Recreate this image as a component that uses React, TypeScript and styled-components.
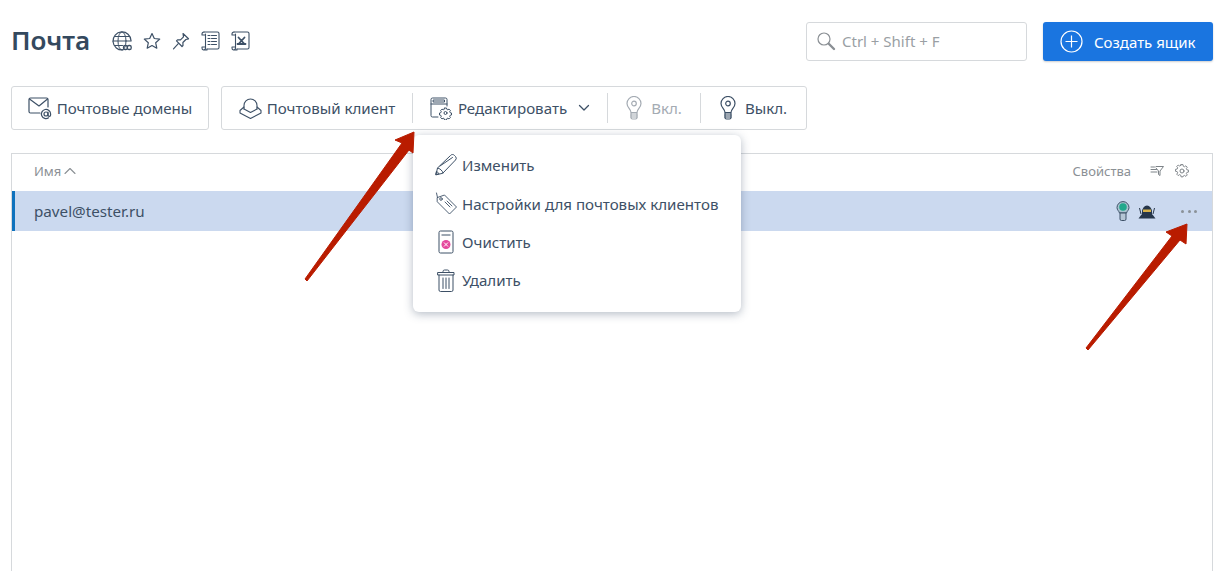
import React from "react";
import styled, { createGlobalStyle } from "styled-components";

const ink = "#3d5066";

const Global = createGlobalStyle`
  html, body { margin: 0; padding: 0; background: #fff; height: 100%; overflow: hidden; }
  body { font-family: "Noto Sans", "Open Sans", sans-serif; color: ${ink}; }
  #root { height: 100%; }
`;

const Page = styled.div`
  position: relative;
  width: 1224px;
  height: 571px;
  overflow: hidden;
  padding: 22px 11px 0 11px;
  box-sizing: border-box;
`;

const Header = styled.div`
  display: flex;
  align-items: center;
  height: 39px;
`;

const Title = styled.h1`
  margin: -2px 22px 0 0;
  font-size: 26px;
  font-weight: 600;
  line-height: 39px;
  color: #34495e;
`;

const HeaderIcons = styled.div`
  display: flex;
  align-items: center;
  gap: 11px;
  margin-top: -2px;
  color: ${ink};
`;

const Spacer = styled.div`
  flex: 1;
`;

const Search = styled.div`
  display: flex;
  align-items: center;
  gap: 6px;
  width: 221px;
  height: 39px;
  box-sizing: border-box;
  padding: 0 0 2px 9px;
  border: 1px solid #d6d9dc;
  border-radius: 3px;
  color: #9a9fa4;
  font-size: 15px;
  margin-right: 16px;
`;

const CreateButton = styled.button`
  display: flex;
  align-items: center;
  gap: 11px;
  width: 170px;
  height: 39px;
  padding: 0 0 0 17px;
  border: 0;
  border-radius: 3px;
  background: #1a75e0;
  color: #fff;
  font: inherit;
  font-size: 15px;
  box-shadow: 0 1px 2px rgba(0, 0, 0, 0.2);
`;

const Toolbar = styled.div`
  display: flex;
  gap: 12px;
  margin-top: 25px;
`;

const Group = styled.div`
  display: flex;
  align-items: center;
  height: 44px;
  box-sizing: border-box;
  border: 1px solid #d6d9dc;
  border-radius: 3px;
`;

const ToolButton = styled.div<{ $w: number; $gap?: number; $disabled?: boolean }>`
  position: relative;
  display: flex;
  align-items: center;
  justify-content: center;
  gap: ${(p) => p.$gap ?? 5}px;
  width: ${(p) => p.$w}px;
  height: 100%;
  font-size: 15.1px;
  white-space: nowrap;
  color: ${(p) => (p.$disabled ? "#a4abb3" : ink)};
`;

const Divider = styled.div`
  width: 1px;
  height: 30px;
  background: #d6d9dc;
`;

const Table = styled.div`
  margin-top: 23px;
  height: 420px;
  border: 1px solid #d6d9dc;
  border-bottom: 0;
`;

const TableHead = styled.div`
  display: flex;
  align-items: center;
  height: 37px;
  padding: 0 23px 3px 22px;
  box-sizing: border-box;
  font-size: 13px;
  color: #8b9095;
`;

const SortLabel = styled.span`
  display: flex;
  align-items: center;
  gap: 3px;
`;

const HeadTools = styled.div`
  display: flex;
  align-items: center;
  gap: 11px;
  margin-left: 19px;
  color: #7d8388;
`;

const Row = styled.div`
  display: flex;
  align-items: center;
  height: 40px;
  box-sizing: border-box;
  padding: 0 15px 0 19px;
  border-left: 3px solid #0f72bd;
  background: #cbd9ef;
  font-size: 15.2px;
`;

const RowIcons = styled.div`
  display: flex;
  align-items: center;
  gap: 8px;
  margin-right: 25px;
`;

const Dots = styled.div`
  display: flex;
  gap: 3.5px;
  span {
    width: 3px;
    height: 3px;
    border-radius: 50%;
    background: #8b9298;
  }
`;

const Menu = styled.div`
  position: absolute;
  z-index: 2;
  top: 48px;
  left: 0;
  width: 328px;
  height: 177px;
  box-sizing: border-box;
  padding: 11px 0 0 22px;
  background: #fff;
  border-radius: 6px;
  box-shadow: 0 2px 10px rgba(40, 60, 90, 0.35);
`;

const MenuItem = styled.div`
  display: flex;
  align-items: center;
  gap: 5px;
  height: 38.4px;
  font-size: 15.1px;
  color: ${ink};
`;

const MenuIcon = styled.div`
  display: flex;
  justify-content: center;
  width: 22px;
`;

const ArrowLayer = styled.svg`
  position: absolute;
  z-index: 3;
  left: 0;
  top: 0;
  pointer-events: none;
`;

const S = { fill: "none", stroke: "currentColor", strokeWidth: 1, strokeLinecap: "round", strokeLinejoin: "round" } as const;

const GlobeIcon = () => (
  <svg width="20" height="20" viewBox="0 0 20 20" {...S}>
    <path d="M11 18.900A9 9 0 1 1 19 9.600" strokeWidth="1.200" />
    <ellipse cx="10" cy="10" rx="4" ry="9" />
    <path d="M2.500 5.500h15M1 10h18M2.500 14.500h8" strokeWidth="1.200" />
    <rect x="11.500" y="14.500" width="3.800" height="4" rx="1.600" strokeWidth="1.300" />
    <rect x="15.400" y="14.500" width="3.800" height="4" rx="1.600" strokeWidth="1.300" />
  </svg>
);

const StarIcon = () => (
  <svg width="18" height="18" viewBox="0 0 18 18" {...S} strokeWidth="1.200">
    <path d="M9 1.500l2.300 5 5.400.6-4 3.700 1.100 5.400L9 13.500l-4.800 2.700 1.100-5.400-4-3.700 5.400-.6z" />
  </svg>
);

const PinIcon = () => (
  <svg width="18" height="18" viewBox="0 0 18 18" {...S} strokeWidth="1.200">
    <path d="M11 1.500l5.500 5.300-2.600.7-3 3 .1 3-1 1-5.500-5.600 1-1h3l3-3z" />
    <path d="M6.300 11.700L1.500 16.800" />
  </svg>
);

const ScrollIcon = ({ x }: { x?: boolean }) => (
  <svg width="19" height="20" viewBox="0 0 19 20" {...S} strokeWidth="1.100">
    <path d="M3 1h13.500a1.500 1.500 0 0 1 1.500 1.500v14a1.500 1.500 0 0 1-1.500 1.500H6" />
    <path d="M3 1a2 2 0 0 0-2 2v1h3.500V3M4.500 3v14M4.500 17a2 2 0 0 1-2 2h0a2 2 0 0 1-1.500-2v-1h3.500M6 18v1H2.500" />
    {x ? (
      <path d="M7.500 6.500l6 6.500M13.500 6.500l-6 6.500M6.500 13h8" strokeWidth="1.800" />
    ) : (
      <path d="M7 4.500h2M10.500 4.500h5M7 7.500h2M10.500 7.500h5M7 10.500h2M10.500 10.500h5M7 13.500h2M10.500 13.500h5" />
    )}
  </svg>
);

const MailIcon = () => (
  <svg width="24" height="24" viewBox="0 0 24 24" {...S} strokeWidth="1.200">
    <path d="M12 17H2.500A1.500 1.500 0 0 1 1 15.500v-12A1.500 1.500 0 0 1 2.500 2h16A1.500 1.500 0 0 1 20 3.500V11" />
    <path d="M1.500 3l9.500 7 8.500-7" />
    <circle cx="18" cy="18" r="2" />
    <path d="M20 16v3a1.300 1.300 0 0 0 2.600 0v-1a4.600 4.600 0 1 0-2 3.800" />
  </svg>
);

const InboxIcon = () => (
  <svg width="23" height="22" viewBox="0 0 23 22" {...S} strokeWidth="1.100">
    <path d="M5 12V8.500a6.500 6.500 0 0 1 13 0V12" />
    <path d="M5 12l6.500 3.500L18 12" />
    <path d="M5 10L1 13.500v2.500l10.500 5.500L22 16v-2.500L18 10" />
  </svg>
);

const SmallGear = () => (
  <g>
    <circle cx="15.500" cy="16" r="1.500" />
    <path d="M14.500 11h2l.3 1.300 1 .5 1.200-.7 1.400 1.400-.7 1.200.5 1 1.300.3v2l-1.300.3-.5 1 .7 1.200-1.400 1.400-1.200-.7-1 .5-.3 1.300h-2l-.3-1.300-1-.5-1.200.7-1.400-1.400.7-1.200-.5-1-1.300-.3v-2l1.300-.3.5-1-.7-1.200 1.400-1.400 1.200.7 1-.5z" />
  </g>
);

const EditPanelIcon = () => (
  <svg width="23" height="23" viewBox="0 0 23 23" {...S} strokeWidth="1">
    <path d="M8 20H2.500A1.500 1.500 0 0 1 1 18.500v-16A1.500 1.500 0 0 1 2.500 1h13A1.500 1.500 0 0 1 17 2.500V9" />
    <path d="M1 7h16" />
    <rect x="3.500" y="3" width="11" height="2" />
    <SmallGear />
  </svg>
);

const BulbIcon = () => (
  <svg width="16" height="24" viewBox="0 0 16 24" {...S} strokeWidth="1.200">
    <path d="M5 16.500C5 13 1 11.500 1 7.500a7 7 0 0 1 14 0c0 4-4 5.500-4 9z" />
    <path d="M5 17h6v4.500A1.500 1.500 0 0 1 9.500 23h-3A1.500 1.500 0 0 1 5 21.500z" />
    <path d="M5 19h6M5 21h6" />
    <circle cx="8" cy="7.500" r="2.300" />
  </svg>
);

const ChevronDown = () => (
  <svg width="12" height="8" viewBox="0 0 12 8" {...S} strokeWidth="1.300" style={{ marginLeft: 6 }}>
    <path d="M1.500 1.500L6 6l4.500-4.500" />
  </svg>
);

const ChevronUp = () => (
  <svg width="12" height="8" viewBox="0 0 12 8" {...S} strokeWidth="1.100">
    <path d="M1 6.500L6 1.500l5 5" />
  </svg>
);

const SearchIcon = () => (
  <svg width="20" height="20" viewBox="0 0 20 20" fill="none" stroke="#8a8f94">
    <circle cx="8" cy="8" r="6" strokeWidth="1.200" />
    <path d="M13 13l5 5" strokeWidth="2.400" strokeLinecap="round" />
  </svg>
);

const PlusCircle = () => (
  <svg width="23" height="23" viewBox="0 0 23 23" fill="none" stroke="#fff" strokeWidth="1.200">
    <circle cx="11.500" cy="11.500" r="10.500" />
    <path d="M11.500 5.500v12M5.500 11.500h12" />
  </svg>
);

const FilterIcon = () => (
  <svg width="14" height="12" viewBox="0 0 14 12" {...S}>
    <path d="M6 1.500h7.500L10 6v4.500L8.500 9.500V6L6 3M1 2h3.500M1 4.500h5.500M1 7h6" />
  </svg>
);

const GearIcon = () => (
  <svg width="14" height="14" viewBox="0 0 14 14" {...S}>
    <circle cx="7" cy="7" r="2" />
    <path d="M6 1h2l.3 1.700 1.300.6L11 2.300l1.500 1.500-1 1.400.6 1.300 1.700.3v2l-1.700.3-.6 1.300 1 1.400-1.500 1.500-1.400-1-1.300.6L8 13.800H6l-.3-1.700-1.300-.6-1.400 1-1.500-1.500 1-1.400L1.900 8.300.2 8V6l1.700-.3.6-1.300-1-1.400L3 1.500l1.400 1 1.300-.6z" transform="translate(.3 -.4) scale(.96)" />
  </svg>
);

const LampOn = () => (
  <svg width="14" height="20" viewBox="0 0 14 20">
    <path d="M7 .6a6 6 0 0 1 6 6c0 2.500-2 3.400-2.500 5.400h-7C3 10 1 9.100 1 6.600a6 6 0 0 1 6-6z" fill="#a9c2cf" stroke="#3d5066" />
    <circle cx="7" cy="6" r="3.800" fill="#21a88c" />
    <path d="M4 12h6v6a1.500 1.500 0 0 1-1.500 1.500h-3A1.500 1.500 0 0 1 4 18z" fill="#b5c5d5" stroke="#3d5066" />
  </svg>
);

const NinjaIcon = () => (
  <svg width="18" height="16" viewBox="0 0 18 16">
    <path d="M4 9a5 6.500 0 0 1 10 0v3H4z" fill="#26364a" />
    <rect x="5" y="6.500" width="8" height="2.500" fill="#d8b24a" />
    <path d="M.5 15.500h17l-3-4h-11z" fill="#26364a" />
    <path d="M3 11L1.500 5M15 11l1.500-6" stroke="#26364a" fill="none" />
  </svg>
);

const PencilIcon = () => (
  <svg width="22" height="22" viewBox="0 0 22 22" {...S} strokeWidth="1">
    <path d="M1 20.500l1.500-6.500L15.500 1.500a2.500 2.500 0 0 1 4 0l1 1a2.500 2.500 0 0 1 0 3.500L8 19z" />
    <path d="M2.500 14c2 0 5.500 3 5.500 5M1 20.500l3-.8-2.200-2.300z" />
    <path d="M5 12L17.500 3.500" />
  </svg>
);

const TagIcon = () => (
  <svg width="22" height="24" viewBox="0 0 22 24" {...S} strokeWidth=".9">
    <path d="M2.500 5.500L1.500 1M2.500 5.500L9.500 3l12 12-7 7L2.500 10z" />
    <circle cx="6" cy="7" r="1.300" />
    <path d="M10 10l5 5M12 9l5 5" />
  </svg>
);

const ClearIcon = () => (
  <svg width="16" height="24" viewBox="0 0 16 24">
    <rect x="1" y="1" width="14" height="22" rx="1.500" fill="none" stroke="#3d5066" />
    <path d="M3.500 5h9" stroke="#3d5066" />
    <circle cx="8" cy="14.500" r="4.500" fill="#e5499d" />
    <path d="M6 12.500l4 4M10 12.500l-4 4" stroke="#fff" />
  </svg>
);

const TrashIcon = () => (
  <svg width="18" height="23" viewBox="0 0 18 23" {...S} strokeWidth="1">
    <path d="M6 3.500V2.500A1.500 1.500 0 0 1 7.500 1h3A1.500 1.500 0 0 1 12 2.500v1" />
    <path d="M1 3.500h16V6H1z" />
    <path d="M2 6v15a1.500 1.500 0 0 0 1.500 1.500h11A1.500 1.500 0 0 0 16 21V6" />
    <path d="M6 9v10.500M9 9v10.500M12 9v10.500" />
  </svg>
);

const menuItems = [
  { label: "Изменить", icon: <PencilIcon /> },
  { label: "Настройки для почтовых клиентов", icon: <TagIcon /> },
  { label: "Очистить", icon: <ClearIcon /> },
  { label: "Удалить", icon: <TrashIcon /> },
];

export default function App() {
  return (
    <Page>
      <Global />
      <Header>
        <Title>Почта</Title>
        <HeaderIcons>
          <GlobeIcon />
          <StarIcon />
          <PinIcon />
          <ScrollIcon />
          <ScrollIcon x />
        </HeaderIcons>
        <Spacer />
        <Search>
          <SearchIcon />
          Ctrl + Shift + F
        </Search>
        <CreateButton>
          <PlusCircle />
          Создать ящик
        </CreateButton>
      </Header>

      <Toolbar>
        <Group>
          <ToolButton $w={196}>
            <MailIcon />
            Почтовые домены
          </ToolButton>
        </Group>
        <Group>
          <ToolButton $w={190}>
            <InboxIcon />
            Почтовый клиент
          </ToolButton>
          <Divider />
          <ToolButton $w={194}>
            <EditPanelIcon />
            Редактировать
            <ChevronDown />
            <Menu>
              {menuItems.map((item) => (
                <MenuItem key={item.label}>
                  <MenuIcon>{item.icon}</MenuIcon>
                  {item.label}
                </MenuItem>
              ))}
            </Menu>
          </ToolButton>
          <Divider />
          <ToolButton $w={92} $gap={9} $disabled>
            <BulbIcon />
            Вкл.
          </ToolButton>
          <Divider />
          <ToolButton $w={105} $gap={9}>
            <BulbIcon />
            Выкл.
          </ToolButton>
        </Group>
      </Toolbar>

      <Table>
        <TableHead>
          <SortLabel>
            Имя
            <ChevronUp />
          </SortLabel>
          <Spacer />
          Свойства
          <HeadTools>
            <FilterIcon />
            <GearIcon />
          </HeadTools>
        </TableHead>
        <Row>
          pavel@tester.ru
          <Spacer />
          <RowIcons>
            <LampOn />
            <NinjaIcon />
          </RowIcons>
          <Dots>
            <span />
            <span />
            <span />
          </Dots>
        </Row>
      </Table>

      <ArrowLayer width="1224" height="571" viewBox="0 0 1224 571">
        <path d="M305 279L402 143L395 140L414 132L413 153L409 150L307 281Z" fill="#b91c00" stroke="#b91c00" strokeWidth="1" strokeLinejoin="round" />
        <path d="M1086 348L1172 236L1166 232L1187 224L1186 244L1180 240L1088 350Z" fill="#b91c00" stroke="#b91c00" strokeWidth="1" strokeLinejoin="round" />
      </ArrowLayer>
    </Page>
  );
}
